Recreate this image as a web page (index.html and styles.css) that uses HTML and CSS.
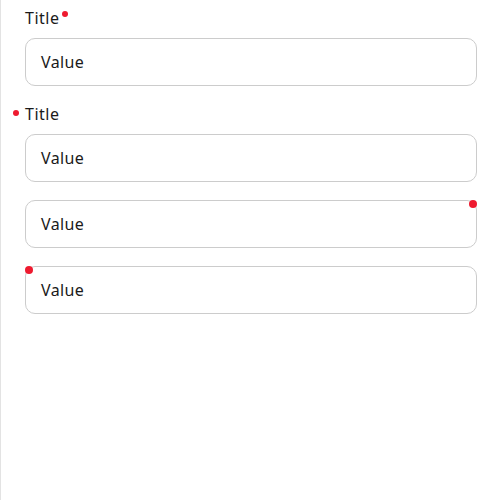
FILE: index.html
```html
<!DOCTYPE html>
<html>
<head>
<meta charset="utf-8">
<link rel="stylesheet" href="styles.css">
</head>
<body>
<div class="page">
  <div class="field">
    <div class="label"><span class="label-text">Title</span><span class="dot dot-after"></span></div>
    <div class="input">Value</div>
  </div>
  <div class="field">
    <div class="label"><span class="dot dot-before"></span><span class="label-text">Title</span></div>
    <div class="input">Value</div>
  </div>
  <div class="field">
    <div class="input">Value<span class="dot dot-corner dot-tr"></span></div>
  </div>
  <div class="field">
    <div class="input">Value<span class="dot dot-corner dot-tl"></span></div>
  </div>
</div>
</body>
</html>
```
FILE: styles.css
```css
html, body {
  margin: 0;
  padding: 0;
  background: #fff;
}
body {
  font-family: "Noto Sans", "DejaVu Sans", sans-serif;
  color: #1a1a1a;
}
.page {
  box-sizing: border-box;
  min-height: 500px;
  border-left: 1px solid #e3e3e3;
  padding: 8px 23px 0 24px;
  display: flex;
  flex-direction: column;
  gap: 18px;
}
.field {
  display: flex;
  flex-direction: column;
  gap: 10px;
}
.label {
  position: relative;
  height: 20px;
  line-height: 20px;
  font-size: 16px;
  letter-spacing: 0.5px;
  display: flex;
  align-items: flex-start;
}
.label-text {
  display: inline-block;
}
.dot {
  display: inline-block;
  width: 6px;
  height: 6px;
  border-radius: 50%;
  background: #ee1a2f;
}
.dot-after {
  margin-left: 3px;
  margin-top: 3px;
}
.dot-before {
  position: absolute;
  left: -12px;
  top: 6px;
}
.input {
  position: relative;
  box-sizing: border-box;
  height: 48px;
  border: 1px solid #cccccc;
  border-radius: 10px;
  padding: 0 15px;
  display: flex;
  align-items: center;
  font-size: 16px;
  letter-spacing: 0.4px;
}
.dot-corner {
  position: absolute;
  width: 8px;
  height: 8px;
}
.dot-tr {
  top: -1px;
  right: -1px;
}
.dot-tl {
  top: -1px;
  left: -1px;
}
```
